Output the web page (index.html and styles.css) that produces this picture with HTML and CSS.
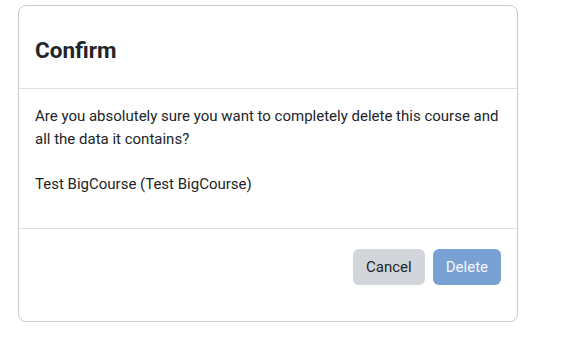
FILE: index.html
```html
<!DOCTYPE html>
<html lang="en">

<head>
    <meta charset="UTF-8">
    <meta name="viewport" content="width=device-width, initial-scale=1.0">
    <title>Confirm</title>
    <link rel="stylesheet" href="styles.css">
</head>

<body>
    <div class="page">
        <div class="dialog">
            <div class="dialogHeader">
                <h2 class="dialogTitle">Confirm</h2>
            </div>
            <div class="dialogBody">
                <p>Are you absolutely sure you want to completely delete this course and all the data it contains?</p>
                <p>Test BigCourse (Test BigCourse)</p>
            </div>
            <div class="dialogFooter">
                <button class="btn btnCancel">Cancel</button>
                <button class="btn btnDelete" disabled>Delete</button>
            </div>
        </div>
    </div>
</body>

</html>
```

FILE: styles.css
```css
body {
    margin: 0;
    font-family: Roboto, "Liberation Sans", sans-serif;
    color: #212529;
    background: #fff;
}

.page {
    padding: 5px 0 0 18px;
}

.dialog {
    width: 500px;
    box-sizing: border-box;
    border: 1px solid #cbcbcb;
    border-radius: 8px;
    background: #fff;
}

.dialogHeader {
    padding: 31px 16px 25px;
    border-bottom: 1px solid #e0e0e0;
}

.dialogTitle {
    margin: 0;
    font-size: 22.5px;
    line-height: 26px;
    font-weight: 700;
}

.dialogBody {
    padding: 16px 16px 33px;
    font-size: 15px;
    line-height: 22.5px;
    border-bottom: 1px solid #e0e0e0;
}

.dialogBody p {
    margin: 0 0 22.5px;
}

.dialogBody p:last-child {
    margin-bottom: 0;
}

.dialogFooter {
    display: flex;
    justify-content: flex-end;
    gap: 8px;
    padding: 20px 16px 36px;
}

.btn {
    height: 36px;
    padding: 0 13px;
    border: none;
    border-radius: 6px;
    font-family: inherit;
    font-size: 15px;
}

.btnCancel {
    background: #d2d6da;
    color: #212529;
}

.btnDelete {
    background: #7aa1d4;
    color: #f4f7fc;
}
```
